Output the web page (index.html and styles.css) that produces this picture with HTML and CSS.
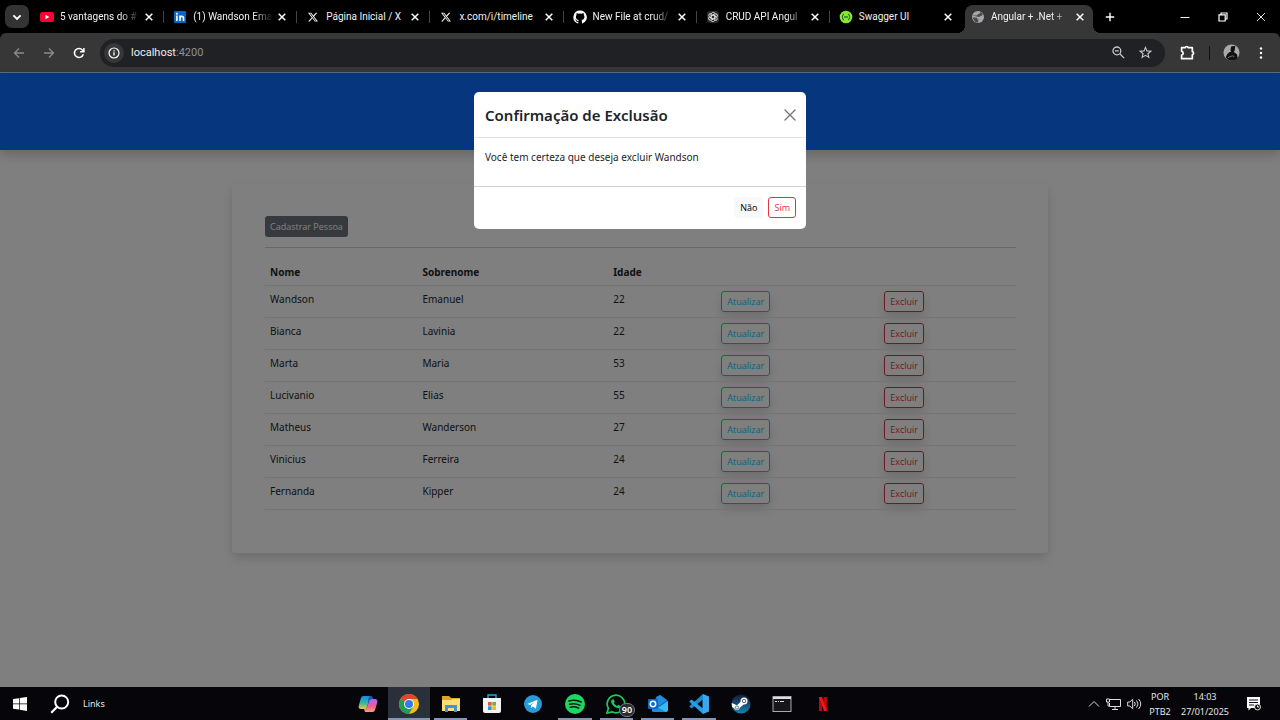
FILE: index.html
```html
<!DOCTYPE html>
<html lang="pt-BR">
<head>
<meta charset="utf-8">
<meta name="viewport" content="width=device-width, initial-scale=1">
<title>Angular + .Net</title>
<link rel="stylesheet" href="styles.css">
</head>
<body>
<svg class="defs" aria-hidden="true">
  <symbol id="x" viewBox="0 0 10 10"><path d="M1.7 1.7l6.6 6.6M8.3 1.7L1.7 8.3" stroke="currentColor" stroke-width="1.5" fill="none"/></symbol>
  <symbol id="xlogo" viewBox="0 0 24 24"><path fill="currentColor" d="M18.9 1.5h3.7l-8.1 9.2L24 22.8h-7.5l-5.8-7.6-6.7 7.6H.3l8.6-9.8L0 1.5h7.700l5.200 6.900zM17.600 20.700h2L6.500 3.500H4.300z"/></symbol>
</svg>

<header class="tabstrip">
  <button class="tab-search" aria-label="Pesquisar guias"><svg viewBox="0 0 10 10"><path d="M2 3.600l3 3 3-3" fill="none" stroke="#fff" stroke-width="1.600"/></svg></button>
  <nav class="tabs" aria-label="Guias">
    <div class="tab"><svg class="fav" viewBox="0 0 14 14"><rect y="2" width="14" height="10" rx="2.500" fill="#f03"/><path d="M5.500 4.800v4.400L9.300 7z" fill="#fff"/></svg><span class="tab-title fade">5 vantagens do #</span><button class="tab-close" aria-label="Fechar"><svg><use href="#x"/></svg></button></div>
    <div class="tab"><svg class="fav" viewBox="0 0 14 14"><rect x="1" y="1" width="12" height="12" rx="1" fill="#0a66c2"/><path d="M3.900 5.600V11M7 5.600V11M7 8.200c0-2.500 3.500-2.500 3.500 0V11" fill="none" stroke="#fff" stroke-width="1.600"/><circle cx="3.900" cy="3.800" r="1" fill="#fff"/></svg><span class="tab-title fade">(1) Wandson Ema</span><button class="tab-close" aria-label="Fechar"><svg><use href="#x"/></svg></button></div>
    <div class="tab"><svg class="fav fav-x"><use href="#xlogo"/></svg><span class="tab-title">Página Inicial / X</span><button class="tab-close" aria-label="Fechar"><svg><use href="#x"/></svg></button></div>
    <div class="tab"><svg class="fav fav-x"><use href="#xlogo"/></svg><span class="tab-title">x.com/i/timeline</span><button class="tab-close" aria-label="Fechar"><svg><use href="#x"/></svg></button></div>
    <div class="tab"><svg class="fav" viewBox="0 0 16 16"><path fill="#fff" d="M8 .7a7.500 7.500 0 0 0-2.400 14.600c.4.1.5-.1.5-.4v-1.500c-2.100.5-2.600-.9-2.600-.9-.3-.9-.8-1.100-.8-1.100-.7-.5.1-.5.1-.5.800.1 1.200.8 1.200.8.700 1.200 1.800.8 2.200.6.100-.5.3-.8.5-1-1.700-.2-3.400-.8-3.400-3.700 0-.8.3-1.500.8-2-.1-.2-.4-1 .1-2 0 0 .6-.2 2.100.8a7 7 0 0 1 3.800 0c1.400-1 2.100-.8 2.100-.8.400 1 .2 1.800.1 2 .5.500.8 1.200.8 2 0 2.900-1.800 3.500-3.400 3.700.300.3.5.8.5 1.400v2.200c0 .3.100.5.500.4A7.500 7.500 0 0 0 8 .7z"/></svg><span class="tab-title fade">New File at crud/</span><button class="tab-close" aria-label="Fechar"><svg><use href="#x"/></svg></button></div>
    <div class="tab"><svg class="fav" viewBox="0 0 14 14"><rect x="1" y="1" width="12" height="12" rx="3" fill="#2b2b2b"/><g fill="none" stroke="#ddd" stroke-width=".9"><path id="pt" d="M5.200 7.900V4.300a2 2 0 0 1 3.700-1M5.200 5.800l3.300-1.900"/><use href="#pt" transform="rotate(60 7 7)"/><use href="#pt" transform="rotate(120 7 7)"/><use href="#pt" transform="rotate(180 7 7)"/><use href="#pt" transform="rotate(240 7 7)"/><use href="#pt" transform="rotate(300 7 7)"/></g></svg><span class="tab-title fade">CRUD API Angul</span><button class="tab-close" aria-label="Fechar"><svg><use href="#x"/></svg></button></div>
    <div class="tab"><svg class="fav" viewBox="0 0 14 14"><circle cx="7" cy="7" r="6.300" fill="#85ea2d"/><path d="M4.800 4.200c-1.500 0-.6 2-1.800 2.800 1.200.8.3 2.800 1.800 2.800M9.200 4.200c1.500 0 .6 2 1.800 2.800-1.200.8-.3 2.800-1.800 2.800M5 7h4" fill="none" stroke="#173647" stroke-width="1"/></svg><span class="tab-title">Swagger UI</span><button class="tab-close" aria-label="Fechar"><svg><use href="#x"/></svg></button></div>
    <div class="tab tab-active"><svg class="fav" viewBox="0 0 14 14"><circle cx="7" cy="7" r="6" fill="#a4a8ad"/><path d="M1.500 5.500C3 4.500 4 6 5.500 5.500S7 3.500 8.500 3.500 9 2 9 1.500L12 4l-1 1.500c-1.500 0-1.500 1-3 1.500M1.500 7.500H5c1.500 0 1 2 2.500 2L7 12.500 4 12z" fill="#4a4c4f"/></svg><span class="tab-title fade">Angular + .Net +</span><button class="tab-close" aria-label="Fechar"><svg><use href="#x"/></svg></button></div>
  </nav>
  <button class="new-tab" aria-label="Nova guia"><svg viewBox="0 0 10 10"><path d="M5 .8v8.400M.8 5h8.400" stroke="#fff" stroke-width="1.400"/></svg></button>
  <div class="window-controls">
    <button aria-label="Minimizar"><svg viewBox="0 0 10 10"><path d="M.5 5.500h9" stroke="#fff"/></svg></button>
    <button aria-label="Restaurar"><svg viewBox="0 0 10 10"><path d="M1 2.800h6.200V9H1zM3 2.500V1h6v6H7.500" fill="none" stroke="#fff" stroke-width="1.200"/></svg></button>
    <button aria-label="Fechar janela"><svg viewBox="0 0 10 10"><path d="M1 1l8 8M9 1L1 9" stroke="#ddd" stroke-width="1"/></svg></button>
  </div>
</header>

<div class="toolbar">
  <button class="nav-button" aria-label="Voltar"><svg viewBox="0 0 12 12"><path d="M11 6H1.500M6 1.500L1.500 6 6 10.500" fill="none" stroke="#8b8b8b" stroke-width="1.300"/></svg></button>
  <button class="nav-button" aria-label="Avançar"><svg viewBox="0 0 12 12"><path d="M1 6h9.500M6 1.500L10.500 6 6 10.500" fill="none" stroke="#8b8b8b" stroke-width="1.300"/></svg></button>
  <button class="nav-button" aria-label="Recarregar"><svg viewBox="0 0 12 12"><path d="M10.300 7.200A4.500 4.500 0 1 1 9.500 3.100L10.700 4.500M10.900 1v3.800H7.100" fill="none" stroke="#fff" stroke-width="1.500"/></svg></button>
  <div class="omnibox">
    <button class="site-info" aria-label="Informações do site"><svg viewBox="0 0 12 12"><circle cx="6" cy="6" r="5" fill="none" stroke="#fff" stroke-width="1.200"/><path d="M6 5.300v3.300M6 3.200v1.200" stroke="#fff" stroke-width="1.300"/></svg></button>
    <span class="url"><b>localhost</b>:4200</span>
    <button class="omni-action" aria-label="Zoom"><svg viewBox="0 0 12 12"><circle cx="4.500" cy="4.500" r="3.600" fill="none" stroke="#c7c7c7" stroke-width="1.200"/><path d="M7.200 7.200l4 4M2.800 4.500h3.400" stroke="#c7c7c7" stroke-width="1.200"/></svg></button>
    <button class="omni-action" aria-label="Favoritar"><svg viewBox="0 0 14 14"><path d="M7 1.500l1.600 3.800 4.100.3-3.100 2.700 1 4L7 10.100l-3.600 2.200 1-4-3.100-2.700 4.100-.3z" fill="none" stroke="#c7c7c7" stroke-width="1.200"/></svg></button>
  </div>
  <div class="toolbar-end">
    <button aria-label="Extensões"><svg class="puzzle" viewBox="0 0 14 14"><path d="M1.500 2.500h3.300a1.500 1.500 0 0 1 2.900 0H11.500v3.700a1.500 1.500 0 0 1 0 2.900v3.700H1.500V9.500a1.900 1.900 0 0 0 0-3.700z" fill="none" stroke="#fff" stroke-width="1.600" stroke-linejoin="round"/></svg></button>
    <span class="toolbar-rule"></span>
    <button aria-label="Perfil"><svg class="avatar" viewBox="0 0 18 18"><circle cx="9" cy="9" r="8.500" fill="#a9a9a9"/><path d="M9 2.500l4-.5-.5 4c-.3 1.500-1 2-1 2.500l3.500 2.500.5 4A8.500 8.500 0 0 1 3 14.500C4 11.500 5 9 8.500 8.300 7.700 7 8 4 9 2.500z" fill="#111"/><path d="M5 14.500l5-2 2 1" stroke="#777" fill="none"/></svg></button>
    <button aria-label="Menu"><svg viewBox="0 0 12 12" fill="#fff"><circle cx="6" cy="1.500" r="1.200"/><circle cx="6" cy="6" r="1.200"/><circle cx="6" cy="10.500" r="1.200"/></svg></button>
  </div>
</div>

<div class="viewport">
  <div class="site-header"></div>
  <main class="card">
    <button class="btn btn-secondary">Cadastrar Pessoa</button>
    <hr class="divider">
    <table class="people">
      <colgroup><col class="col-name"><col class="col-surname"><col class="col-age"><col class="col-update"><col></colgroup>
      <thead><tr><th>Nome</th><th>Sobrenome</th><th>Idade</th><th></th><th></th></tr></thead>
      <tbody>
        <tr><td>Wandson</td><td>Emanuel</td><td>22</td><td><button class="btn btn-info">Atualizar</button></td><td><button class="btn btn-danger shadow">Excluir</button></td></tr>
        <tr><td>Bianca</td><td>Lavinia</td><td>22</td><td><button class="btn btn-info">Atualizar</button></td><td><button class="btn btn-danger shadow">Excluir</button></td></tr>
        <tr><td>Marta</td><td>Maria</td><td>53</td><td><button class="btn btn-info">Atualizar</button></td><td><button class="btn btn-danger shadow">Excluir</button></td></tr>
        <tr><td>Lucivanio</td><td>Elias</td><td>55</td><td><button class="btn btn-info">Atualizar</button></td><td><button class="btn btn-danger shadow">Excluir</button></td></tr>
        <tr><td>Matheus</td><td>Wanderson</td><td>27</td><td><button class="btn btn-info">Atualizar</button></td><td><button class="btn btn-danger shadow">Excluir</button></td></tr>
        <tr><td>Vinicius</td><td>Ferreira</td><td>24</td><td><button class="btn btn-info">Atualizar</button></td><td><button class="btn btn-danger shadow">Excluir</button></td></tr>
        <tr><td>Fernanda</td><td>Kipper</td><td>24</td><td><button class="btn btn-info">Atualizar</button></td><td><button class="btn btn-danger shadow">Excluir</button></td></tr>
      </tbody>
    </table>
  </main>

  <div class="backdrop">
    <section class="modal" role="dialog" aria-labelledby="modal-title">
      <header class="modal-header">
        <h1 id="modal-title">Confirmação de Exclusão</h1>
        <button class="modal-close" aria-label="Fechar"><svg viewBox="0 0 12 12"><path d="M1 1l10 10M11 1L1 11" stroke="#777" stroke-width="1.400" stroke-linecap="round"/></svg></button>
      </header>
      <p class="modal-body">Você tem certeza que deseja excluir Wandson</p>
      <footer class="modal-footer">
        <button class="btn btn-light">Não</button>
        <button class="btn btn-danger">Sim</button>
      </footer>
    </section>
  </div>
</div>

<footer class="taskbar">
  <div class="task-start">
    <button aria-label="Iniciar"><svg class="start-icon" viewBox="0 0 14 14" fill="#fff"><path d="M0 2l6-.8v5.300H0zM6.700 1.100L14 0v6.500H6.700zM0 7.200h6v5.400l-6-.9zM6.700 7.200H14V14l-7.300-1.200z"/></svg></button>
    <button aria-label="Pesquisar"><svg class="search-icon" viewBox="0 0 20 20"><circle cx="11.700" cy="8" r="6.500" fill="none" stroke="#fff" stroke-width="2"/><path d="M7.200 12.700L1.200 18.800" stroke="#fff" stroke-width="2.200"/></svg></button>
    <span>Links</span>
  </div>
  <nav class="apps" aria-label="Aplicativos">
    <button class="app" aria-label="Copilot"><svg viewBox="0 0 20 20"><defs><linearGradient id="ca" x1="0" y1="0" x2="0" y2="1"><stop stop-color="#1688e8"/><stop offset=".55" stop-color="#31b8a0"/><stop offset="1" stop-color="#f5c93c"/></linearGradient><linearGradient id="cb" x1="0" y1="0" x2="0" y2="1"><stop stop-color="#a866ee"/><stop offset=".55" stop-color="#ee5c9d"/><stop offset="1" stop-color="#ff9c66"/></linearGradient></defs><path d="M5.500 2H13l2 3h-3.500L9 13c-.5 1.500-1 2-2.500 2H3c-2 0-2.800-1.500-2.200-3.500l2-7C3.300 2.800 4 2 5.500 2z" fill="url(#ca)"/><path d="M14 5h3c2 0 2.800 1.500 2.200 3.500l-2 7c-.5 1.700-1.200 2.500-2.700 2.500H7l-1-3c2 0 2.500-.5 3-2l2-6c.5-1.500 1.300-2 3-2z" fill="url(#cb)"/><path d="M11.500 2H13c1.200 0 1.600 1 2 3h-1c-1.700 0-2.500.5-3 2l-1 3 .3-5z" fill="#1556b8"/></svg></button>
    <button class="app app-current" aria-label="Chrome"><svg viewBox="0 0 20 20"><circle cx="10" cy="10" r="10" fill="#f9bd16"/><path d="M10 10L1.340 5A10 10 0 0 1 18.660 5H10z" fill="#df4435"/><path d="M10 10L1.340 5A10 10 0 0 0 10 20l4.300-7.500z" fill="#239b56"/><circle cx="10" cy="10" r="5" fill="#fff"/><circle cx="10" cy="10" r="4" fill="#327be8"/></svg></button>
    <button class="app app-open" aria-label="Explorador"><svg viewBox="0 0 20 20"><path d="M1 2h7l2 2h9v13H1z" fill="#dfa526"/><path d="M1 6h9l2-1h7v12H1z" fill="#ffdd78"/><path d="M4 18v-7h12v7h-3v-4H7v4z" fill="#4095cd"/></svg></button>
    <button class="app" aria-label="Loja"><svg viewBox="0 0 20 20"><path d="M6 5V1h8v4" fill="none" stroke="#20a9df" stroke-width="1.400"/><path d="M1 4h18v13q0 2-2 2H3q-2 0-2-2z" fill="#f3f3f3"/><path d="M6 8h3.700v3.700H6z" fill="#ed5532"/><path d="M10.300 8H14v3.700h-3.700z" fill="#78af28"/><path d="M6 12.300h3.700V16H6z" fill="#2898dd"/><path d="M10.300 12.300H14V16h-3.700z" fill="#f4ba28"/></svg></button>
    <button class="app" aria-label="Telegram"><svg viewBox="0 0 20 20"><circle cx="10" cy="10" r="9" fill="#279bd5"/><path d="M4.200 10l10.400-4.200-1.700 9-3.100-2.300-1.500 1.500-.3-2.700 4.200-3.600-5.200 3.300z" fill="#fff"/></svg></button>
    <button class="app app-open" aria-label="Spotify"><svg viewBox="0 0 20 20"><circle cx="10" cy="10" r="10" fill="#20d663"/><path d="M4 7c4-1.300 8.500-.9 12.300 1M4.600 10.300c3.500-1 7.200-.6 10.400 1M5.200 13.300c3-.8 5.800-.5 8.500.9" fill="none" stroke="#101810" stroke-width="1.500" stroke-linecap="round"/></svg></button>
    <button class="app app-open" aria-label="WhatsApp"><svg viewBox="0 0 20 20"><path d="M1 19l1.400-4.600A8.800 8.800 0 1 1 6 17.800z" fill="none" stroke="#20c95b" stroke-width="1.700"/><path d="M6.200 5.500l1.500-.2 1 2.400-.8 1.200c.8 1.500 1.800 2.400 3.300 3.100l1.100-1.200 2.300 1.100c0 2-1.800 2.700-3.400 2.200-3-.9-5-3-6-5.600-.3-1.200.2-2.400 1-3z" fill="#20c95b"/></svg><span class="badge">90</span></button>
    <button class="app app-open" aria-label="Outlook"><svg viewBox="0 0 20 20"><path d="M4 7l8-6 8 6v9l-2 2H5z" fill="#1266b8"/><path d="M8 3l4-2 7 5-8 6z" fill="#1f8edb"/><path d="M4 12l7 1 9-6v9q0 2-2 2H6q-2 0-2-2z" fill="#31bdf1"/><path d="M4 10l14 8H6q-2 0-2-2z" fill="#198cdf"/><rect y="5" width="10" height="10" rx="1" fill="#0d69c2"/><circle cx="5" cy="10" r="2.700" fill="none" stroke="#fff" stroke-width="1.500"/></svg></button>
    <button class="app app-open" aria-label="VS Code"><svg viewBox="0 0 20 20"><path d="M14 0l6 2.500v15L14 20l-.5-1.500v-17z" fill="#39a7ee"/><path d="M14 0v5.500L2.500 14.500.5 13V12z" fill="#198bd2"/><path d="M14 20v-5.500L2.500 5.500.5 7v1z" fill="#269de5"/></svg></button>
    <button class="app" aria-label="Steam"><svg viewBox="0 0 20 20"><defs><linearGradient id="st" x1="0" y1="0" x2="0" y2="1"><stop stop-color="#151b39"/><stop offset="1" stop-color="#1781b5"/></linearGradient></defs><circle cx="10" cy="10" r="9.500" fill="url(#st)"/><path d="M.7 9l5.300 2.300 3.800-3.500 3 2.700-4 3.200A3 3 0 0 1 3 14l-2-1z" fill="#fff"/><circle cx="13" cy="7" r="3.500" fill="#fff"/><circle cx="13" cy="7" r="2" fill="#313b55"/><circle cx="13" cy="7" r="1.300" fill="#fff"/><circle cx="6" cy="13.500" r="1.600" fill="none" stroke="#31506f" stroke-width=".8"/></svg></button>
    <button class="app" aria-label="Terminal"><svg viewBox="0 0 20 20"><rect x="1" y="2.500" width="18" height="15" fill="#171717" stroke="#aaa"/><path d="M1 4h18" stroke="#ddd" stroke-width="2"/><path d="M3 7.500h2M6 7.500h1M8 7.500h4" stroke="#ddd"/></svg></button>
    <button class="app" aria-label="Netflix"><svg viewBox="0 0 20 20"><path d="M6 3h3v14H6zM11 3h3v14h-3z" fill="#b70710"/><path d="M6 3h3l5 14h-3z" fill="#ed1722"/></svg></button>
  </nav>
  <div class="tray">
    <svg class="tray-icon" viewBox="0 0 12 12"><path d="M1 8.500l5-5 5 5" fill="none" stroke="#ddd"/></svg>
    <svg class="tray-monitor" viewBox="0 0 15 12"><path d="M4 1.500h10.500v7H3.500V5M6 11.500h6M9 8.500v3M.5 1h3v3h-3zM2 4v4h1.500" fill="none" stroke="#ddd"/></svg>
    <svg class="tray-monitor" viewBox="0 0 15 12"><path d="M.7 4h2l3-2.700v9.400L2.700 8h-2zM7.500 4q1.500 2 0 4M9.500 2.500q3 3.500 0 7M11.500 1q4.500 5 0 10" fill="none" stroke="#ddd"/></svg>
    <div class="lang"><span>POR</span><span>PTB2</span></div>
    <div class="clock"><span>14:03</span><span>27/01/2025</span></div>
    <svg class="notes" viewBox="0 0 15 14"><path d="M1 0h13v11H5l-2.500 2.500V11H1z" fill="#fff"/><path d="M3 3h9M3 5.500h9M3 8h5" stroke="#111"/><circle cx="11.500" cy="10" r="3" fill="#111" stroke="#ddd"/><path d="M11.500 8.500V10H13" stroke="#fff" fill="none"/></svg>
  </div>
</footer>
</body>
</html>
```
FILE: styles.css
```css
* { box-sizing: border-box; }

body {
  margin: 0;
  min-height: 100vh;
  display: flex;
  flex-direction: column;
  background: #000;
  color: #212529;
  font: 10px/16px "Noto Sans", "Open Sans", sans-serif;
}

button {
  margin: 0;
  padding: 0;
  border: 0;
  background: none;
  color: inherit;
  font: inherit;
  display: inline-flex;
  align-items: center;
  justify-content: center;
}

svg { display: block; flex: none; }
.defs { position: absolute; width: 0; height: 0; }

/* Browser tabs */
.tabstrip {
  display: flex;
  align-items: center;
  height: 33px;
  padding-left: 5px;
  color: #f2f2f2;
  font-family: Roboto, sans-serif;
}
.tab-search {
  width: 24px;
  height: 23px;
  margin-right: 2px;
  border-radius: 7px;
  background: #333;
}
.tab-search svg { width: 12px; height: 12px; }
.tabs { flex: 1; display: flex; align-self: stretch; min-width: 0; }
.tab {
  flex: 1 1 0;
  min-width: 0;
  position: relative;
  display: flex;
  align-items: center;
  padding: 0 10px 0 9px;
}
.tab:not(.tab-active)::after {
  content: "";
  position: absolute;
  right: 0;
  top: 11px;
  width: 1px;
  height: 12px;
  background: #444;
}
.tab:nth-last-child(2)::after { display: none; }
.fav { width: 14px; height: 14px; margin-right: 6px; }
.fav-x { width: 10px; height: 10px; margin: 0 8px 0 2px; }
.tab-title {
  flex: 1;
  min-width: 0;
  overflow: hidden;
  white-space: nowrap;
  margin-right: 4px;
}
.fade {
  -webkit-mask-image: linear-gradient(to right, #000 60px, transparent 80px);
  mask-image: linear-gradient(to right, #000 60px, transparent 80px);
}
.tab-close svg { width: 10px; height: 10px; color: #fff; }
.tab-active {
  margin: 5px 7px 0 2px;
  padding: 0 8px 5px 6px;
  border-radius: 8px 8px 0 0;
  background: #373737;
}
.tab-active::before {
  content: "";
  position: absolute;
  left: -8px;
  right: -8px;
  bottom: 0;
  height: 8px;
  background:
    radial-gradient(circle at 0 0, transparent 8px, #373737 8px) left / 8px 8px no-repeat,
    radial-gradient(circle at 100% 0, transparent 8px, #373737 8px) right / 8px 8px no-repeat;
}
.new-tab { width: 20px; height: 22px; }
.new-tab svg { width: 10px; height: 10px; }
.window-controls { width: 160px; padding-left: 46px; display: flex; }
.window-controls button { flex: 1; height: 33px; }
.window-controls svg { width: 10px; height: 10px; }

/* Address bar */
.toolbar {
  display: flex;
  align-items: center;
  height: 40px;
  padding-left: 4px;
  border-bottom: 1px solid #5b6d87;
  border-radius: 6px 6px 0 0;
  background: #373737;
}
.nav-button { width: 30px; height: 28px; }
.nav-button svg { width: 12px; height: 12px; }
.omnibox {
  flex: 1;
  display: flex;
  align-items: center;
  height: 28px;
  margin-left: 6px;
  padding: 0 6px 0 4px;
  border-radius: 14px;
  background: #202124;
}
.site-info { width: 20px; height: 20px; border-radius: 50%; background: #373737; }
.site-info svg { width: 12px; height: 12px; }
.url { flex: 1; margin-left: 7px; color: #8f9296; font: 11px/16px Roboto, sans-serif; }
.url b { color: #eee; font-weight: 400; }
.omni-action { width: 27px; height: 27px; }
.omni-action svg { width: 13px; height: 13px; }
.toolbar-end { display: flex; align-items: center; width: 115px; padding-left: 8px; }
.toolbar-end button { width: 29px; height: 28px; }
.toolbar-end svg { width: 12px; height: 12px; }
.toolbar-end .puzzle { width: 15px; height: 15px; }
.toolbar-end .avatar { width: 17px; height: 17px; }
.toolbar-rule { width: 1px; height: 14px; margin: 0 7px; background: #111; }

/* Page */
.viewport { position: relative; flex: 1; background: #fff; }
.site-header { height: 77px; background: #0d6efd; box-shadow: 0 5px 11px rgba(0, 0, 0, .2); }
.card {
  width: 90%;
  max-width: 816px;
  margin: 34px auto;
  padding: 32px 32px 43px 33px;
  border-radius: 4px;
  box-shadow: 0 5px 11px rgba(0, 0, 0, .15);
}
.btn {
  height: 21px;
  padding: 0 5px;
  border: 1px solid transparent;
  border-radius: 3px;
  font-family: "Open Sans", "Noto Sans", sans-serif;
  font-size: 9px;
  line-height: 14px;
}
.btn-secondary { background: #6c757d; color: #fff; }
.btn-info { border-color: #0dcaf0; color: #0dcaf0; box-shadow: 0 5px 11px rgba(0, 0, 0, .15); }
.btn-danger { border-color: #dc3545; color: #dc3545; }
.shadow { box-shadow: 0 5px 11px rgba(0, 0, 0, .15); }
.btn-light { background: #f8f9fa; color: #000; }
.card > .btn { display: flex; padding: 0 4px; }
.divider { height: 1px; margin: 10px 0 11px; border: 0; background: #d0d1d3; }
.people { width: 100%; border-collapse: collapse; table-layout: fixed; }
.people th, .people td {
  padding: 5px;
  border-bottom: 1px solid #e6e8ea;
  text-align: left;
  vertical-align: top;
}
.people td .btn { display: flex; }
.col-name { width: 20.3%; }
.col-surname { width: 25.4%; }
.col-age { width: 14.4%; }
.col-update { width: 21.7%; }

/* Dialog */
.backdrop {
  position: absolute;
  inset: 0;
  padding: 19px 16px;
  background: rgba(0, 0, 0, .5);
}
.modal {
  width: 100%;
  max-width: 332px;
  margin: 0 auto;
  border-radius: 5px;
  background: #fff;
}
.modal-header {
  display: flex;
  align-items: center;
  justify-content: space-between;
  padding: 11px 10px 10px 11px;
  border-bottom: 1px solid #dee2e6;
}
.modal-header h1 { margin: 0; font-size: 15px; line-height: 24px; font-weight: 600; }
.modal-close svg { width: 12px; height: 12px; }
.modal-body { margin: 0; padding: 11px 11px 21px; }
.modal-footer {
  display: flex;
  justify-content: flex-end;
  gap: 5px;
  padding: 10px 10px 11px;
  border-top: 1px solid #ced2d6;
}

/* Taskbar */
.taskbar { display: flex; height: 33px; background: #05050a; color: #e6e6e6; font-size: 9px; }
.task-start { width: 347px; display: flex; align-items: center; }
.task-start button { width: 40px; height: 33px; }
.start-icon { width: 14px; height: 14px; }
.search-icon { width: 20px; height: 20px; }
.task-start span { margin-left: 3px; }
.apps { width: 497px; display: flex; }
.app { flex: 1; position: relative; }
.app svg { width: 20px; height: 20px; }
.app-current { background: #29303a; }
.app-current::after, .app-open::after {
  content: "";
  position: absolute;
  left: 4px;
  right: 4px;
  bottom: 0;
  height: 2px;
  background: #8495b8;
}
.app-current::after { left: 0; right: 0; }
.badge {
  position: absolute;
  right: 2px;
  bottom: 3px;
  width: 16px;
  height: 14px;
  border: 1px solid #777;
  border-radius: 7px;
  background: #292d31;
  color: #fff;
  font-size: 9px;
  line-height: 12px;
  font-weight: 600;
}
.tray {
  margin-left: auto;
  padding-right: 19px;
  display: flex;
  align-items: center;
  gap: 6px;
}
.tray-icon { width: 12px; height: 12px; }
.tray-monitor { width: 15px; height: 12px; }
.lang, .clock { display: flex; flex-direction: column; align-items: center; line-height: 15px; }
.lang { width: 24px; }
.clock { width: 54px; }
.notes { width: 15px; height: 14px; margin-left: 8px; }
```
